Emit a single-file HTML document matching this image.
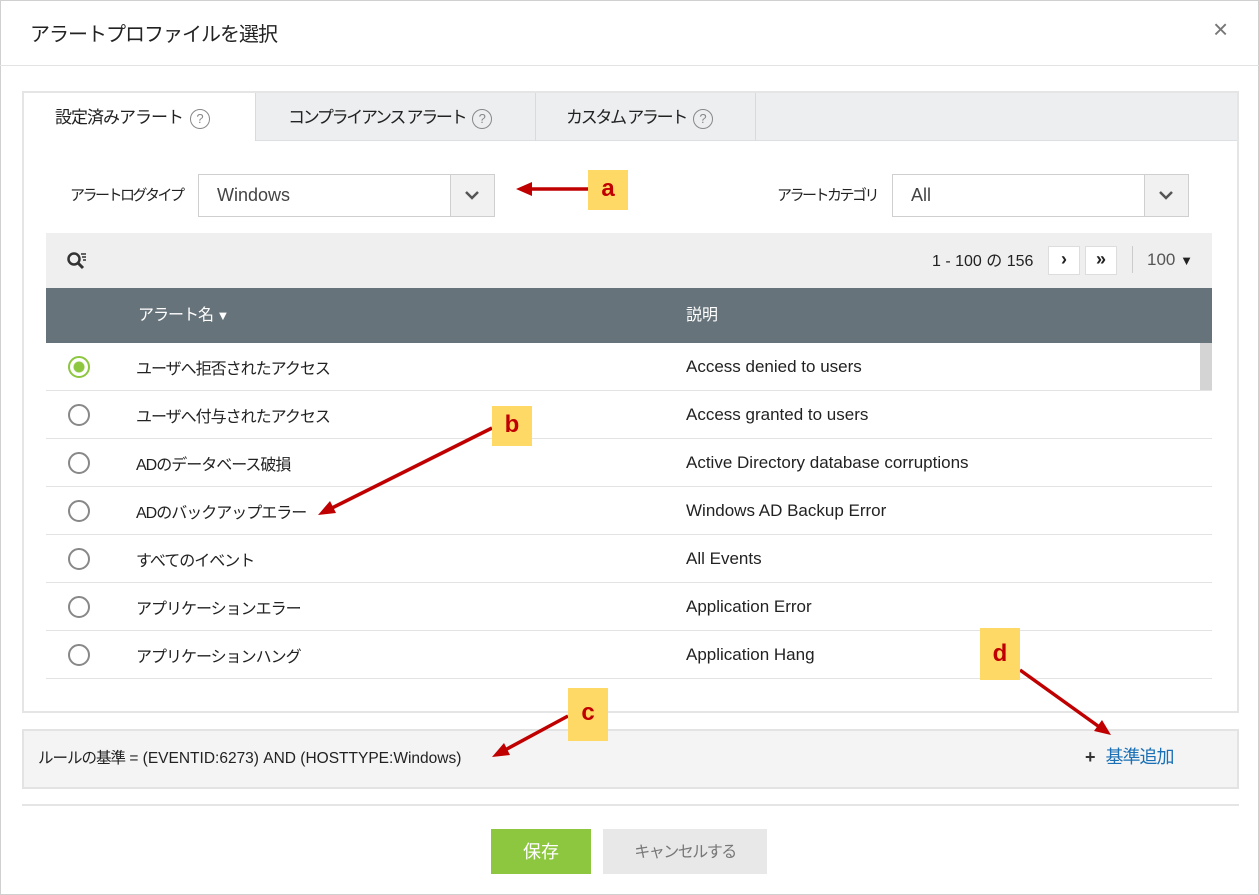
<!DOCTYPE html>
<html><head><meta charset="utf-8"><style>
*{box-sizing:border-box;margin:0;padding:0}
body{width:1259px;height:895px;background:#fff;position:relative;overflow:hidden;font-family:"Liberation Sans","Noto Sans CJK JP",sans-serif;color:#222}
.a{position:absolute}
.frame{left:0;top:0;width:1259px;height:895px;border:1px solid #d0d0d0}
.t{white-space:nowrap;line-height:1.2}
.q{display:inline-block;width:20px;height:20px;border:1.5px solid #888;border-radius:50%;font-size:13px;line-height:17px;text-align:center;color:#888;vertical-align:middle;margin-left:7px;letter-spacing:0}
.row{left:46px;width:1166px;height:48px;border-bottom:1px solid #e3e3e3;font-size:17px}
.row .r{position:absolute;left:22px;top:13px;width:22px;height:22px;border:2px solid #888;border-radius:50%}
.row .n{position:absolute;left:90px;top:15px;line-height:24px;font-size:16px;letter-spacing:-1px;white-space:nowrap}
.row .d{position:absolute;left:640px;top:12px;line-height:24px;white-space:nowrap}
.tag{background:#ffd966;color:#c00000;font-size:24px;text-align:center;font-weight:bold}
</style></head><body>
<div class="a frame"></div>
<div class="a t" style="left:30px;top:23px;font-size:20px;letter-spacing:-1px">アラートプロファイルを選択</div>
<div class="a t" style="left:1213px;top:14px;font-size:26px;color:#777">×</div>
<div class="a" style="left:0;top:65px;width:1259px;height:1px;background:#e3e3e3"></div>

<div class="a" style="left:22px;top:91px;width:1217px;height:622px;border:2px solid #e5e5e5"></div>
<div class="a" style="left:24px;top:93px;width:1213px;height:48px;background:#eceeef;border-bottom:1px solid #dde0e2"></div>
<div class="a" style="left:24px;top:93px;width:231px;height:50px;background:#fff"></div>
<div class="a" style="left:255px;top:93px;width:1px;height:48px;background:#d8dbdd"></div>
<div class="a" style="left:535px;top:93px;width:1px;height:48px;background:#d8dbdd"></div>
<div class="a" style="left:755px;top:93px;width:1px;height:48px;background:#d8dbdd"></div>
<div class="a t" style="left:55px;top:108px;font-size:17px;letter-spacing:-1px">設定済みアラート<span class="q">?</span></div>
<div class="a t" style="left:288px;top:108px;font-size:17px;letter-spacing:-2.3px">コンプライアンス アラート<span class="q">?</span></div>
<div class="a t" style="left:566px;top:108px;font-size:17px;letter-spacing:-2.3px">カスタム アラート<span class="q">?</span></div>

<div class="a t" style="left:70px;top:187px;font-size:15px;letter-spacing:-2.5px">アラートログタイプ</div>
<div class="a" style="left:198px;top:174px;width:297px;height:43px;border:1px solid #cfcfcf"></div>
<div class="a" style="left:450px;top:175px;width:44px;height:41px;background:#f1f1f1;border-left:1px solid #cfcfcf"></div>
<div class="a t" style="left:217px;top:185px;font-size:18px;color:#444">Windows</div>
<svg class="a" style="left:464px;top:189px" width="16" height="12"><path d="M2 3l6 6 6-6" stroke="#555" stroke-width="2.5" fill="none"/></svg>
<div class="a t" style="left:777px;top:187px;font-size:15px;letter-spacing:-2.5px">アラートカテゴリ</div>
<div class="a" style="left:892px;top:174px;width:297px;height:43px;border:1px solid #cfcfcf"></div>
<div class="a" style="left:1144px;top:175px;width:44px;height:41px;background:#f1f1f1;border-left:1px solid #cfcfcf"></div>
<div class="a t" style="left:911px;top:185px;font-size:18px;color:#444">All</div>
<svg class="a" style="left:1158px;top:189px" width="16" height="12"><path d="M2 3l6 6 6-6" stroke="#555" stroke-width="2.5" fill="none"/></svg>

<div class="a" style="left:46px;top:233px;width:1166px;height:55px;background:#efefef"></div>
<svg class="a" style="left:66px;top:251px" width="22" height="20"><circle cx="8" cy="8" r="5.5" stroke="#333" stroke-width="2.5" fill="none"/><path d="M12 12l5 5" stroke="#333" stroke-width="3"/><path d="M15 3h5M16 6h4M17 9h3" stroke="#333" stroke-width="1.5"/></svg>
<div class="a t" style="left:932px;top:252px;font-size:16px">1 - 100 の 156</div>
<div class="a" style="left:1048px;top:246px;width:32px;height:29px;background:#fff;border:1px solid #ddd;font-size:18px;font-weight:bold;text-align:center;line-height:25px">›</div>
<div class="a" style="left:1085px;top:246px;width:32px;height:29px;background:#fff;border:1px solid #ddd;font-size:18px;font-weight:bold;text-align:center;line-height:25px">»</div>
<div class="a" style="left:1132px;top:246px;width:1px;height:27px;background:#ccc"></div>
<div class="a t" style="left:1147px;top:250px;font-size:17px;color:#555">100 <span style="font-size:13px;color:#222">▼</span></div>

<div class="a" style="left:46px;top:288px;width:1166px;height:55px;background:#67737a"></div>
<div class="a t" style="left:138px;top:306px;font-size:16px;color:#fff;letter-spacing:-1px">アラート名 <span style="font-size:13px">▼</span></div>
<div class="a t" style="left:686px;top:306px;font-size:16px;color:#fff">説明</div>
<div class="a" style="left:1200px;top:343px;width:12px;height:48px;background:#d4d4d4"></div>

<div class="a row" style="top:343px"><div class="r" style="border-color:#8dc63f;background:radial-gradient(circle,#8dc63f 0 5px,#fff 6px)"></div><div class="n">ユーザへ拒否されたアクセス</div><div class="d">Access denied to users</div></div>
<div class="a row" style="top:391px"><div class="r"></div><div class="n">ユーザへ付与されたアクセス</div><div class="d">Access granted to users</div></div>
<div class="a row" style="top:439px"><div class="r"></div><div class="n">ADのデータベース破損</div><div class="d">Active Directory database corruptions</div></div>
<div class="a row" style="top:487px"><div class="r"></div><div class="n">ADのバックアップエラー</div><div class="d">Windows AD Backup Error</div></div>
<div class="a row" style="top:535px"><div class="r"></div><div class="n">すべてのイベント</div><div class="d">All Events</div></div>
<div class="a row" style="top:583px"><div class="r"></div><div class="n">アプリケーションエラー</div><div class="d">Application Error</div></div>
<div class="a row" style="top:631px"><div class="r"></div><div class="n">アプリケーションハング</div><div class="d">Application Hang</div></div>

<div class="a" style="left:22px;top:729px;width:1217px;height:60px;background:#f4f4f4;border:2px solid #e3e3e3"></div>
<div class="a t" style="left:38px;top:750px;font-size:15.5px"><span style="letter-spacing:-1px">ルールの基準</span> = (EVENTID:6273) AND (HOSTTYPE:Windows)</div>
<div class="a t" style="left:1085px;top:747px;font-size:18px;color:#1a6fb5"><b style="color:#333">+</b>&nbsp;&nbsp;<span style="letter-spacing:-1px">基準追加</span></div>
<div class="a" style="left:22px;top:804px;width:1217px;height:2px;background:#e5e5e5"></div>

<div class="a" style="left:491px;top:829px;width:100px;height:45px;background:#8dc63f;color:#fff;font-size:18px;text-align:center;line-height:47px">保存</div>
<div class="a" style="left:603px;top:829px;width:164px;height:45px;background:#e8e8e8;color:#777;font-size:16px;text-align:center;line-height:47px;letter-spacing:-1.5px">キャンセルする</div>

<svg class="a" style="left:0;top:0" width="1259" height="895">
<g stroke="#c00000" stroke-width="3.5" fill="#c00000">
<line x1="588" y1="189" x2="530" y2="189"/><path d="M516 189l16-7v14z" stroke="none"/>
<line x1="492" y1="428" x2="332" y2="508"/><path d="M318 515l12-14 6 12z" stroke="none"/>
<line x1="568" y1="716" x2="505" y2="750"/><path d="M492 757l12-14 6 12z" stroke="none"/>
<line x1="1020" y1="670" x2="1098" y2="726"/><path d="M1111 735l-17-4 8-11z" stroke="none"/>
</g></svg>
<div class="a tag" style="left:588px;top:170px;width:40px;height:40px;line-height:38px">a</div>
<div class="a tag" style="left:492px;top:406px;width:40px;height:40px;line-height:38px">b</div>
<div class="a tag" style="left:568px;top:688px;width:40px;height:53px;line-height:50px">c</div>
<div class="a tag" style="left:980px;top:628px;width:40px;height:52px;line-height:52px">d</div>
</body></html>
